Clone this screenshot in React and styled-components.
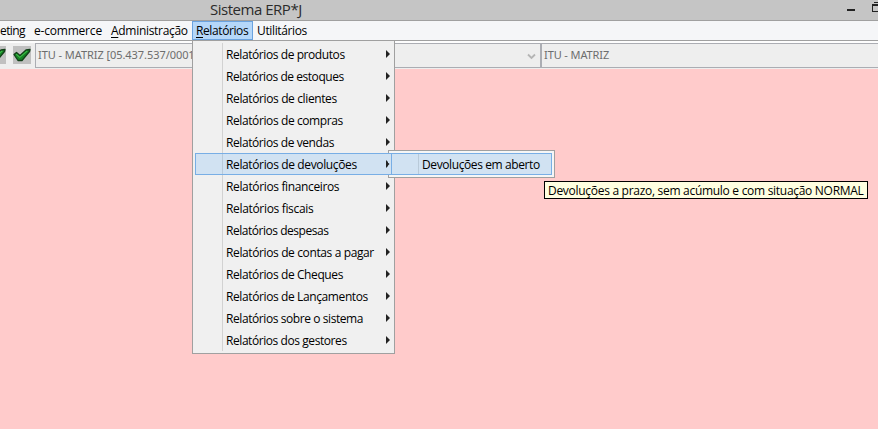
import React from "react";
import styled, { createGlobalStyle, css } from "styled-components";

const Global = createGlobalStyle`
  *{box-sizing:border-box}
  body{margin:0;overflow:hidden;background:#ffcbcb;font-family:"Open Sans","Noto Sans",sans-serif;font-size:12px;color:#000}
`;
const Window = styled.div`position:relative;width:878px;height:429px;overflow:hidden;background:#ffcbcb;`;
const TitleBar = styled.header`display:flex;justify-content:space-between;height:21px;background:#c5c5c5;border-bottom:1px solid #a0a0a0;`;
const Title = styled.h1`margin:0 0 0 210px;font-size:15px;font-weight:400;line-height:19px;white-space:nowrap;color:#2b2b2b;letter-spacing:${p => p.$track}px;`;
const Controls = styled.svg`display:block;width:40px;height:20px;`;
const MenuBar = styled.nav`display:flex;height:20px;background:#f5f6f8;border-bottom:1px solid #a0a0a0;`;
const MenuTitle = styled.div`
  flex:none;width:${p => p.$w}px;height:19px;padding-left:${p => p.$pad || 0}px;line-height:20px;
  white-space:nowrap;letter-spacing:${p => p.$track || 0}px;
  ${p => p.$open && css`background:#b5d7f9;box-shadow:inset 0 0 0 1px #6ba3df;`}
`;
const Key = styled.span`text-decoration:underline;text-underline-offset:2px;text-decoration-thickness:1px;`;
const ToolBar = styled.div`display:flex;height:28px;padding-top:2px;background:#eee;box-shadow:inset 0 2px #fdfdfd;`;
const Icons = styled.div`flex:none;display:flex;gap:7px;width:35px;height:25px;padding-top:3px;`;
const CheckBox = styled.svg`flex:none;width:18px;height:18px;background:#c0c0c0;margin-left:${p => p.$shift || 0}px;`;
const Field = styled.div`
  display:flex;justify-content:space-between;flex:${p => (p.$w ? "none" : 1)};${p => p.$w && `width:${p.$w}px;`}
  height:25px;padding:0 4px 0 2px;border:1px solid #abadb3;border-right-width:${p => (p.$w ? 1 : 0)}px;
  font:11px/22px "Noto Sans",sans-serif;color:#6d6d6d;white-space:nowrap;letter-spacing:${p => p.$track}px;
`;
const Chevron = styled.svg`width:9px;height:7px;margin-top:9px;`;
const Menu = styled.div`
  position:absolute;left:192px;top:40px;width:203px;height:314px;padding:2px;border:1px solid #a0a0a0;
  background:linear-gradient(#d2d2d2,#d2d2d2) 29px 2px / 1px 308px no-repeat #f0f0f0;
`;
const Row = styled.div`
  display:flex;justify-content:space-between;align-items:center;
  height:22px;padding:0 2px 0 31px;line-height:22px;white-space:nowrap;
  ${p => p.$active && css`background:linear-gradient(#b9cad9,#b9cad9) 27px 1px / 1px 20px no-repeat #d1e2f2;box-shadow:inset 0 0 0 1px #78aee5;`}
`;
const Label = styled.span`padding-top:2px;letter-spacing:${p => p.$track || 0}px;`;
const Arrow = styled.svg`width:4px;height:8px;margin-top:-1px;`;
const SubMenu = styled.div`position:absolute;left:388px;top:150px;width:167px;height:28px;padding:2px;border:1px solid #a0a0a0;background:#f6f6f6;`;
const Cover = styled.div`position:absolute;z-index:2;left:388px;top:153px;display:flex;align-items:center;width:3px;height:22px;background:#d1e2f2;border:solid #78aee5;border-width:1px 0;`;
const SubRow = styled(Row)`width:161px;`;
const Tip = styled.div`position:absolute;left:544px;top:181px;width:324px;height:18px;padding-left:3px;border:1px solid #000;background:#ffffe1;line-height:18px;white-space:nowrap;letter-spacing:${p => p.$track}px;`;

const Check = ({ shift }) => (
  <CheckBox $shift={shift} viewBox="0 0 18 18">
    <path d="M1 8.5 3.5 6.5 7 9.5 13 4 17 3.5 16.5 5.5 9 14.5 5 14.5Z" fill="#168325" stroke="#123f18" strokeWidth="1.3" strokeLinejoin="round" />
    <path d="M3.2 8.2 6.8 11.3 14.3 4.8" fill="none" stroke="#3ebd48" strokeWidth="1.1" />
  </CheckBox>
);
const items = [
  ["de produtos", -0.42], ["de estoques", -0.45], ["de clientes", -0.38], ["de compras", -0.4], ["de vendas", -0.42],
  ["de devoluções", -0.37], ["financeiros", -0.36], ["fiscais", -0.33], ["despesas", -0.47], ["de contas a pagar", -0.38],
  ["de Cheques", -0.4], ["de Lançamentos", -0.39], ["sobre o sistema", -0.42], ["dos gestores", -0.43],
];

export default function App() {
  return (
    <Window>
      <Global />
      <TitleBar>
        <Title $track={-0.48}>Sistema ERP*J</Title>
        <Controls viewBox="0 0 40 20" shapeRendering="crispEdges">
          <path d="M9 9h8v2H9zM36 2h4v1h-4zM34 4h6v2h-6zM34 6h1v6h-1zM34 11h6v1h-6z" fill="#222" />
        </Controls>
      </TitleBar>
      <MenuBar>
        <MenuTitle $w={34} $track={-0.6}>eting</MenuTitle>
        <MenuTitle $w={77} $track={-0.2}>e-commerce</MenuTitle>
        <MenuTitle $w={81} $track={-0.3}><Key>A</Key>dministração</MenuTitle>
        <MenuTitle $w={61} $pad={4} $track={-0.4} $open><Key>R</Key>elatórios</MenuTitle>
        <MenuTitle $w={70} $pad={4} $track={-0.36}>Utilitários</MenuTitle>
      </MenuBar>
      <ToolBar>
        <Icons><Check shift={-12} /><Check /></Icons>
        <Field $w={506} $track={-0.06}>
          ITU - MATRIZ [05.437.537/0001-00]
          <Chevron viewBox="0 0 9 7"><path d="M1 1.5 4.5 5 8 1.5" fill="none" stroke="#b5b5b5" strokeWidth="1.8" /></Chevron>
        </Field>
        <Field $track={-0.1}>ITU - MATRIZ</Field>
      </ToolBar>
      <Menu>
        {items.map(([text, track]) => (
          <Row key={text} $active={text === "de devoluções"}>
            <Label $track={track}>Relatórios {text}</Label>
            <Arrow viewBox="0 0 4 8"><path d="M0 0 4 4 0 8Z" fill="#222" /></Arrow>
          </Row>
        ))}
      </Menu>
      <SubMenu>
        <SubRow $active><Label $track={-0.4}>Devoluções em aberto</Label></SubRow>
      </SubMenu>
      <Cover><Arrow viewBox="2 0 4 8"><path d="M0 0 4 4 0 8Z" fill="#222" /></Arrow></Cover>
      <Tip $track={-0.29}>Devoluções a prazo, sem acúmulo e com situação NORMAL</Tip>
    </Window>
  );
}
